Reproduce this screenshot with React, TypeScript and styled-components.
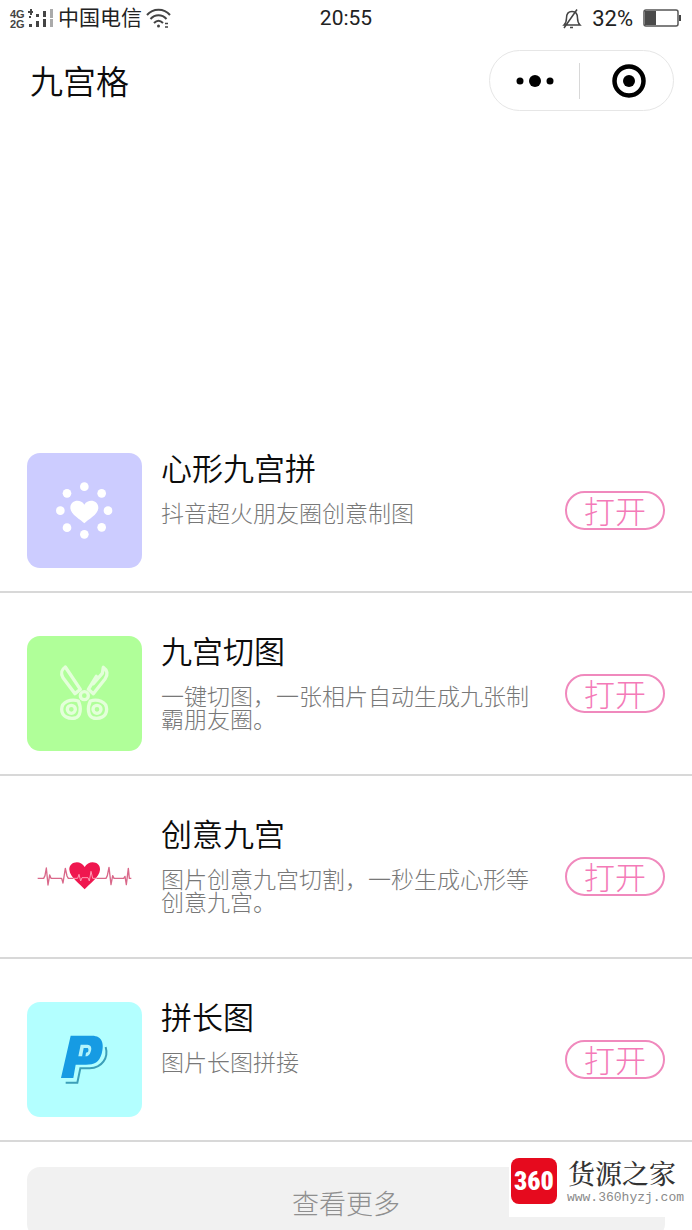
import React from "react";
import styled, { createGlobalStyle } from "styled-components";

const GlobalStyle = createGlobalStyle`
  * { box-sizing: border-box; }
  body {
    margin: 0;
    background: #fff;
    color: #0c0c0c;
    font-family: Roboto, "Noto Sans CJK SC", sans-serif;
  }
  button { font: inherit; margin: 0; padding: 0; background: none; border: 0; cursor: pointer; }
`;

const Screen = styled.div`
  height: 100vh;
  overflow-y: auto;
  scrollbar-width: none;
`;

const StatusBar = styled.div`
  display: grid;
  grid-template-columns: 1fr auto 1fr;
  align-items: center;
  height: 37px;
  padding: 0 10px;
  font-size: 21px;
  line-height: 37px;
  color: #222;
`;

const StatusGroup = styled.div<{ $end?: boolean }>`
  display: flex;
  align-items: center;
  justify-content: ${(p) => (p.$end ? "flex-end" : "flex-start")};
  gap: ${(p) => (p.$end ? 10 : 4)}px;
`;

const Percent = styled.span`
  font-size: 22px;
`;

const Network = styled.div`
  display: flex;
  align-items: center;
`;

const Generations = styled.div`
  display: flex;
  flex-direction: column;
  width: 18px;
  font: bold 11px/10px "Liberation Sans", sans-serif;
  color: #444;
`;

const Header = styled.header`
  display: flex;
  align-items: center;
  justify-content: space-between;
  height: 87px;
  padding: 0 18px 0 30px;
`;

const AppTitle = styled.h1`
  margin: 0;
  padding-top: 4px;
  font-size: 33px;
  font-weight: 350;
  line-height: 40px;
`;

const Capsule = styled.div`
  display: flex;
  align-items: center;
  width: 185px;
  height: 61px;
  border: 1px solid #e6e6e6;
  border-radius: 31px;
`;

const CapsuleButton = styled.button`
  display: flex;
  flex: 1;
  align-items: center;
  justify-content: center;
  height: 36px;
  & + & {
    padding-left: 4px;
    border-left: 1px solid #d8d8d8;
  }
`;

const AdSpace = styled.div`
  height: 286px;
`;

const List = styled.ul`
  margin: 0;
  padding: 0;
  list-style: none;
`;

const Row = styled.li`
  display: flex;
  align-items: flex-start;
  gap: 19px;
  padding: 43px 27px 23px;
  border-bottom: 2px solid #d8d8d8;
`;

const Tile = styled.div<{ $color: string }>`
  flex: none;
  width: 115px;
  height: 115px;
  border-radius: 13px;
  background: ${(p) => p.$color};
  svg { display: block; width: 100%; height: 100%; }
`;

const RowText = styled.div`
  flex: 1;
  min-width: 0;
`;

const RowTitle = styled.h2`
  margin: 0 0 16px;
  font-size: 31px;
  font-weight: 350;
  line-height: 34px;
`;

const Description = styled.p`
  margin: 0;
  font-size: 23px;
  font-weight: 300;
  line-height: 23px;
  color: #787878;
`;

const OpenButton = styled.button`
  flex: none;
  align-self: center;
  width: 100px;
  height: 39px;
  margin-left: 16px;
  padding-top: 4px;
  border: 2px solid #f089bd;
  border-radius: 20px;
  font-size: 31px;
  font-weight: 300;
  line-height: 31px;
  color: #f47ab8;
`;

const Footer = styled.div`
  display: flex;
  padding: 25px 27px 0;
`;

const MoreButton = styled.button`
  flex: 1;
  height: 70px;
  border-radius: 13px;
  background: #f1f1f1;
  font-size: 27px;
  font-weight: 300;
  color: #8f8f8f;
`;

const Watermark = styled.aside`
  position: fixed;
  right: 0;
  bottom: 13px;
  display: flex;
  align-items: center;
  gap: 10px;
  height: 74px;
  padding: 2px 8px 0 2px;
  background: #fff;
`;

const Badge = styled.div`
  display: flex;
  align-items: center;
  justify-content: center;
  width: 46px;
  height: 46px;
  border-radius: 8px;
  background: #e60a1e;
  color: #fff;
  font: 900 26px/46px "Roboto Condensed", Roboto, sans-serif;
`;

const SiteText = styled.div`
  display: flex;
  flex-direction: column;
`;

const SiteName = styled.strong`
  padding-left: 1px;
  font: 500 27px/34px "Noto Serif CJK SC", "Noto Sans CJK SC", serif;
  color: #333;
`;

const SiteUrl = styled.span`
  font: 13px/16px "Liberation Mono", monospace;
  color: #8a8a8a;
`;

const SignalBars = () => (
  <svg width="26" height="20" viewBox="0 0 26 20" aria-hidden="true">
    <g fill="#444">
      <path d="M0 2h2V0h2v2h1v2H4v2H2V4H0z" />
      <rect x="1" y="7" width="2" height="2" />
      <rect x="1" y="15" width="3" height="3" />
      <rect x="8" y="5" width="3" height="3" />
      <rect x="8" y="12" width="3" height="6" />
      <rect x="15" y="2" width="3" height="6" />
      <rect x="15" y="10" width="3" height="8" />
    </g>
    <g fill="#aaa">
      <rect x="22" y="0" width="3" height="9" />
      <rect x="22" y="10" width="3" height="8" />
    </g>
  </svg>
);

const Wifi = () => (
  <svg width="26" height="22" viewBox="0 0 26 22" fill="none" stroke="#444" strokeWidth="2" aria-hidden="true">
    <path d="M1 7C7 0 18 0 24 7M4.500 11C9 6 16 6 20.500 11M8 15C11 12 14 12 17 15" />
    <circle cx="12.500" cy="18" r="1.500" fill="#444" stroke="none" />
    <path d="M19 15.500h3M19 19h3" strokeWidth="1.500" />
  </svg>
);

const MutedBell = () => (
  <svg width="20" height="22" viewBox="0 0 20 22" fill="none" stroke="#444" strokeWidth="1.500" aria-hidden="true">
    <path d="M2 17c2-2 2.500-4 2.500-7C4.500 5 7 3.500 10 3.500S15.500 5 15.500 10c0 3 .5 5 2.500 7zM8 19.500h3M2 20L15 1.500" />
  </svg>
);

const Battery = () => (
  <svg width="39" height="19" viewBox="0 0 39 19" aria-hidden="true">
    <rect x="1" y="1" width="34" height="16" rx="2" fill="none" stroke="#555" strokeWidth="1.500" />
    <rect x="2" y="2" width="11" height="14" fill="#4a4a4a" />
    <rect x="36" y="6" width="2" height="6" fill="#444" />
  </svg>
);

const HeartRing = () => (
  <svg viewBox="22 26 345 345" fill="#fff" aria-hidden="true">
    {[
      [194, 127], [246, 147], [265, 199], [246, 249],
      [194, 270], [142, 250], [122, 199], [142, 147],
    ].map(([x, y]) => (
      <circle key={`${x}-${y}`} cx={x} cy={y} r="13" />
    ))}
    <path d="M194 237C184 226 152 211 152 190C152 168 182 162 194 181C206 162 236 168 236 190C236 211 204 226 194 237Z" />
  </svg>
);

const ScissorsIcon = () => (
  <svg viewBox="22 19 345 345" fill="none" stroke="#e4ffda" strokeWidth="10" strokeLinejoin="round" strokeLinecap="round" aria-hidden="true">
    <path d="M137 112C124 121 122 129 130 144L166 192L182 179Z" />
    <path d="M230 140L206 179L221 192L256 148C266 134 263 121 251 113L248 131L221 162" />
    <circle cx="194" cy="198" r="12" />
    <path d="M176 214C155 207 126 215 126 239C126 262 149 269 167 265C183 260 186 235 176 214Z" />
    <path d="M212 214C232 207 261 215 261 239C261 262 239 269 221 265C205 260 202 235 212 214Z" />
    <circle cx="155" cy="239" r="12" />
    <circle cx="232" cy="239" r="12" />
  </svg>
);

const Heartbeat = () => (
  <svg viewBox="22 -33 345 345" fill="none" strokeLinejoin="round" aria-hidden="true">
    <path fill="#ef174f" d="M195 178C183 163 150 142 149 119C148 94 183 88 195 111C207 88 243 94 241 119C240 142 207 163 195 178Z" />
    <path stroke="#d9688a" strokeWidth="4" d="M54 145H72L76 137L80 114L85 165L90 135L94 145H126L130 159L137 115L142 138L146 145H160M230 145H259L263 137L268 112L274 164L279 137L283 145H312L316 139L320 164L326 115L329 145H335" />
    <path stroke="#ff9bb4" strokeWidth="3" d="M160 145H174L178 133L183 153L187 143H205L209 153L214 124L219 145H232" />
  </svg>
);

const PayLogo = () => (
  <svg viewBox="22 19 345 345" fill="none" aria-hidden="true">
    <path stroke="#3c9fb8" strokeWidth="6" d="M138 261H173L182 218H210C248 216 267 186 258 154" />
    <path fill="#169be3" d="M153 120H217C249 120 254 146 246 174C239 199 224 207 199 207H168L161 247H124Z" />
    <path fill="#b3f4fb" d="M183 147H203C215 147 217 158 213 168C210 178 205 182 197 182H176Z" />
    <path fill="#169be3" d="M192 157H203C207 157 207 165 205 169L199 171L197 183H187Z" />
  </svg>
);

const tools = [
  { title: "心形九宫拼", text: "抖音超火朋友圈创意制图", color: "#ccccff", icon: <HeartRing /> },
  { title: "九宫切图", text: "一键切图，一张相片自动生成九张制霸朋友圈。", color: "#b0ff99", icon: <ScissorsIcon /> },
  { title: "创意九宫", text: "图片创意九宫切割，一秒生成心形等创意九宫。", color: "#ffffff", icon: <Heartbeat /> },
  { title: "拼长图", text: "图片长图拼接", color: "#b3ffff", icon: <PayLogo /> },
];

export default function App() {
  return (
    <Screen>
      <GlobalStyle />
      <StatusBar>
        <StatusGroup>
          <Network>
            <Generations>
              <span>4G</span>
              <span>2G</span>
            </Generations>
            <SignalBars />
          </Network>
          <span>中国电信</span>
          <Wifi />
        </StatusGroup>
        <span>20:55</span>
        <StatusGroup $end>
          <MutedBell />
          <Percent>32%</Percent>
          <Battery />
        </StatusGroup>
      </StatusBar>
      <Header>
        <AppTitle>九宫格</AppTitle>
        <Capsule>
          <CapsuleButton aria-label="更多">
            <svg width="38" height="14" viewBox="0 0 38 14">
              <circle cx="4" cy="7" r="3.500" />
              <circle cx="19" cy="7" r="6" />
              <circle cx="34" cy="7" r="3.500" />
            </svg>
          </CapsuleButton>
          <CapsuleButton aria-label="关闭">
            <svg width="34" height="34" viewBox="0 0 34 34">
              <circle cx="17" cy="17" r="14.500" fill="none" stroke="#000" strokeWidth="4.500" />
              <circle cx="17" cy="17" r="6" />
            </svg>
          </CapsuleButton>
        </Capsule>
      </Header>
      <AdSpace />
      <List>
        {tools.map((tool) => (
          <Row key={tool.title}>
            <Tile $color={tool.color}>{tool.icon}</Tile>
            <RowText>
              <RowTitle>{tool.title}</RowTitle>
              <Description>{tool.text}</Description>
            </RowText>
            <OpenButton>打开</OpenButton>
          </Row>
        ))}
      </List>
      <Footer>
        <MoreButton>查看更多</MoreButton>
      </Footer>
      <Watermark>
        <Badge>360</Badge>
        <SiteText>
          <SiteName>货源之家</SiteName>
          <SiteUrl>www.360hyzj.com</SiteUrl>
        </SiteText>
      </Watermark>
    </Screen>
  );
}
